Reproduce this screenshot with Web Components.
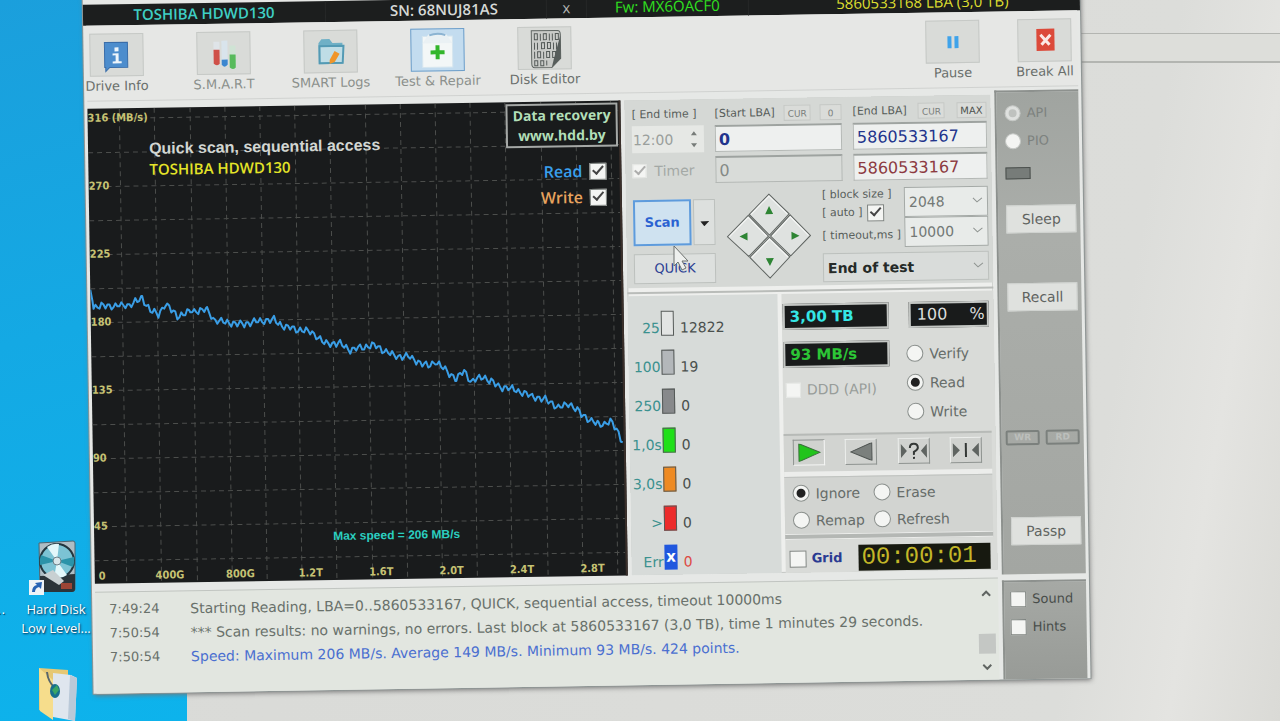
<!DOCTYPE html>
<html lang="en">
<head>
<meta charset="utf-8">
<title>Drive test utility</title>
<style>
html, body { margin: 0; height: 100%; }
body { font: 13px/16px "DejaVu Sans", "Open Sans", sans-serif; color: #3c423f; overflow: hidden; }
</style>
</head>
<body>
<disk-desktop>
  <desktop-icon slot="icons" kind="disk">Hard Disk<br>Low Level...</desktop-icon>
  <desktop-icon slot="icons" kind="folder"></desktop-icon>
  <app-window>
    <drive-strip slot="top"></drive-strip>
    <tool-bar slot="top">
      <tool-button icon="info">Drive Info</tool-button>
      <tool-button icon="smart" faded>S.M.A.R.T</tool-button>
      <tool-button icon="logs" faded>SMART Logs</tool-button>
      <tool-button icon="test" faded active>Test &amp; Repair</tool-button>
      <tool-button icon="editor">Disk Editor</tool-button>
      <tool-button slot="end" icon="pause">Pause</tool-button>
      <tool-button slot="end" icon="break">Break All</tool-button>
    </tool-bar>
    <speed-chart slot="chart"></speed-chart>
    <scan-settings slot="controls"></scan-settings>
    <block-stats slot="stats"></block-stats>
    <scan-monitor slot="monitor"></scan-monitor>
    <event-log slot="log"></event-log>
    <side-rail slot="rail"></side-rail>
  </app-window>
</disk-desktop>

<script>
const BASE = `
:host, *, *::before, *::after { box-sizing: border-box; }
button, input, select { font: inherit; color: inherit; margin: 0; border-radius: 0; }
button { padding: 0; }
label { display: flex; align-items: center; white-space: nowrap; }
input[type=checkbox], input[type=radio] { appearance: none; flex: none; width: 17px; height: 17px; background: #f4f5f3; border: 1px solid #7d827f; display: grid; place-items: center; }
input[type=radio] { border-radius: 50%; border-color: #8b908d; }
input[type=radio]:checked::before { content: ""; width: 9px; height: 9px; border-radius: 50%; background: #222; }
input[type=checkbox]:checked::before { content: ""; width: 11px; height: 6px; border: solid #444; border-width: 0 0 2px 2px; transform: translateY(-2px) rotate(-48deg); }
input:disabled { border-color: #e4e6e3; }
`;
function define(name, css, html) {
  customElements.define(name, class extends HTMLElement {
    constructor() {
      super();
      const t = document.createElement('template');
      t.innerHTML = `<style>${BASE}${css}</style>` + (typeof html === 'function' ? html(this) : html);
      this.attachShadow({ mode: 'open' }).append(t.content.cloneNode(true));
    }
  });
}

/* ---------- desktop ---------- */
define('disk-desktop', `
:host { display: block; position: relative; min-height: 100%; overflow: hidden; background: linear-gradient(100deg, #d9dad7 0%, #dcddda 84%, #e4e4e1 92%, #dadad6 100%); }
.wall { position: absolute; inset: 0 auto 0 0; width: 187px; background: linear-gradient(165deg, #1b9fdc, #14a9e4 45%, #0db3ec); }
.band { position: absolute; top: 33px; right: 0; width: 200px; height: 30px; border: solid #b3b5b1; border-width: 1px 0 2px; background: #dddeda; }
.icons { position: absolute; left: 16px; top: 540px; width: 80px; display: flex; flex-direction: column; gap: 28px; }
.edge { position: absolute; left: -3px; top: 602px; color: #fff; text-shadow: 1px 1px 1px #035; }
.cursor { position: absolute; left: 673px; top: 245px; z-index: 2; }
`, `
<div class="wall"></div><div class="band"></div>
<span class="edge">..</span>
<div class="icons"><slot name="icons"></slot></div>
<slot></slot>
<svg class="cursor" width="18" height="26" viewBox="0 0 18 26"><path d="M1 1v20l4-4 4 8 4-2-4-7h6z" fill="#eef0ee" stroke="#6c706e"/></svg>`);

const DESK = {
  disk: `<svg width="52" height="56" viewBox="0 0 52 56">
    <path d="M13 3 47 1q2 0 2 2v46q0 2-2 2H16q-2 0-2-2z" fill="#aebdc4" stroke="#4e6570"/>
    <path d="M14 36 49 34v15q0 3-3 3H17q-3 0-3-3z" fill="#2b3439"/>
    <circle cx="31" cy="21" r="17" fill="#7cc3d4" stroke="#22363f" stroke-width="2"/>
    <path d="M31 21 21 7a17 17 0 0 1 12-3zM31 21l10 14a17 17 0 0 1-13 3z" fill="#e3f7fa"/>
    <path d="M31 21 15 15a17 17 0 0 0-1 10zM31 21l16 6a17 17 0 0 0 1-10z" fill="#2b93a9"/>
    <circle cx="31" cy="21" r="4" fill="#d8e6ea" stroke="#6d8088"/>
    <path d="m17 35 10-5 11 11-5 4z" fill="#c8d0d2"/><path d="M35 43h11v6H35z" fill="#9b4535"/>
    <path d="M3 40h15v15H3z" fill="#eef3f7"/><path d="M6 52q0-6 5-7l-2-2 7-1-1 7-2-2q-4 1-4 5z" fill="#2763b4"/></svg>`,
  folder: `<svg width="52" height="56" viewBox="0 0 52 56">
    <path d="M13 2 42 4v46H26L13 44z" fill="#e6c874"/>
    <path d="M27 7 45 9l6 3-2 43-22-4z" fill="#dfe6ee"/><path d="m44 9 7 3-2 43-7-2z" fill="#bac9d8"/>
    <path d="M13 2 27 14v40L14 45z" fill="#f6dd8c"/>
    <path d="M21 6q1 10 8 16" fill="none" stroke="#59666b" stroke-width="2"/>
    <ellipse cx="29" cy="25" rx="5" ry="7" fill="#176f8d"/><path d="m26 24 5-5 2 5-4 5z" fill="#3aa565"/></svg>`
};
define('desktop-icon', `
:host { display: flex; flex-direction: column; align-items: center; color: #fff; font: 13px/19px "Open Sans", sans-serif; text-align: center; white-space: nowrap; text-shadow: 1px 1px 2px #024; }
svg { display: block; margin: 0 8px 4px 0; }
`, el => DESK[el.getAttribute('kind')] + '<div><slot></slot></div>');

/* ---------- window frame ---------- */
define('app-window', `
:host { position: absolute; left: 88px; right: 195px; top: -20px; display: block; transform: rotate(-0.9deg); background: #e6e8e6; padding: 17px 3px 0; box-shadow: 0 0 0 1px #8f9695, 1px 2px 5px #777; }
.body { display: grid; grid-template-columns: minmax(0, 1fr) 84px; }
.left { padding: 7px 4px 0 0; display: grid; gap: 8px; }
.main { display: grid; grid-template-columns: minmax(0, 1fr) 366px; gap: 4px; }
.controls { display: grid; gap: 8px; background: #eeefed; box-shadow: inset 0 0 0 1px #c5c8c5; }
.lower { display: grid; grid-template-columns: 150px 1fr; gap: 4px; border-top: 2px solid #b9bcb9; margin-top: -4px; padding-top: 2px; }
`, `
<slot name="top"></slot>
<div class="body">
  <div class="left">
    <div class="main">
      <slot name="chart"></slot>
      <div class="controls"><slot name="controls"></slot>
        <div class="lower"><slot name="stats"></slot><slot name="monitor"></slot></div></div>
    </div>
    <slot name="log"></slot>
  </div>
  <slot name="rail"></slot>
</div>`);

define('drive-strip', `
:host { display: grid; grid-template-columns: 242fr 221fr 40fr 162fr 332fr; height: 21px; margin: 0 -3px; background: #1c1e1e; line-height: 21px; font-size: 15px; font-family: "Open Sans", sans-serif; text-align: center; }
span { white-space: nowrap; }
span + span { border-left: 1px solid #262828; }
.model { color: #3fcfc4; font-weight: 600; } .sn { color: #d6d9d6; padding-left: 16px; font-weight: 600; } .x { color: #b4b7b4; } .fw { color: #30e020; } .lba { color: #dede30; padding-left: 16px; }
`, `<span class="model">TOSHIBA HDWD130</span><span class="sn">SN: 68NUJ81AS</span><span class="x">x</span><span class="fw">Fw: MX6OACF0</span><span class="lba">5860533168 LBA (3,0 TB)</span>`);

define('tool-bar', `
:host { display: flex; justify-content: space-between; height: 76px; padding: 8px 6px 0 3px; background: #e6e7e5; border-bottom: 1px solid #d0d2d0; }
div { display: flex; gap: 53px; } div + div { gap: 38px; }
`, `<div><slot></slot></div><div><slot name="end"></slot></div>`);

const TOOL = {
  info: `<path d="M10 8h23v25H15l-4 4V33h-1z" fill="#4d8dcd" stroke="#3a6da9"/><path d="M20 13h4v4h-4zM18 19h6v8h3v2h-9v-2h3v-6h-3z" fill="#eef5fb"/>`,
  smart: `<path d="M12 9h6v22q-3 3-6 0z" fill="#dfe4e8"/><path d="M12 17h6v14q-3 3-6 0z" fill="#cf5048"/><path d="M20 8h6v24q-3 4-6 0z" fill="#d9e4ec"/><path d="M20 27h6v5q-3 4-6 0z" fill="#3b86cf"/><path d="M28 13h6v22q-3 3-6 0z" fill="#cfe3d4"/><path d="M28 22h6v13q-3 3-6 0z" fill="#58ba5c"/>`,
  logs: `<path d="M10 33V12l3-4h8l3 4h10v21z" fill="#6fb0c6"/><path d="M11 15h24l-1 17H11z" fill="#bfdde6" stroke="#539ab4" stroke-width="2"/><path d="m21 29 5-9 5 3-5 8-5 2z" fill="#ef962a"/>`,
  test: `<path d="M7 7h30v31H7z" fill="#f3f7f7" stroke="#d6e6ef"/><path d="m7 14 6-9h18l6 9z" fill="#eaf1f4"/><path d="M14 6q8-3 16 0" fill="none" stroke="#8cb4d2" stroke-width="2"/><path d="M20 16h4v5h5v4h-5v5h-4v-5h-5v-4h5z" fill="#33b62b"/>`,
  editor: `<path d="M9 3h26q3 0 3 4v24l-9 9H12q-3 0-3-4z" fill="#c9cbc8" stroke="#606663"/><path d="M38 8v23l-9 9 2-8z" fill="#575d5b"/><g fill="none" stroke="#555b59" stroke-width="1"><path d="M12 6h3v6h-3zM18 6v7M21 6h3v6h-3zM27 6v7M30 6v7M33 6h3v6h-3zM12 15v7M15 15v7M19 15h3v6h-3zM25 15h3v6h-3zM31 15v7M34 15v7M12 24v7M15 24h3v6h-3zM21 24v7M24 24h3v6h-3zM30 24h3v6h-3zM12 33h3v5h-3zM18 33h3v5h-3zM24 33v5"/></g>`,
  pause: `<path d="M17 15h4v12h-4zM24 15h4v12h-4z" fill="#3fa3ea"/>`,
  break: `<path d="M14 9h18v22H14z" fill="#dc4a3a"/><path d="m18 15 9 10M28 15l-9 10" stroke="#fbe9e5" stroke-width="3"/>`
};
define('tool-button', `
:host { display: block; width: 54px; }
button { display: flex; flex-direction: column; align-items: center; width: 100%; border: 0; background: none; color: #6a6f6c; line-height: 20px; white-space: nowrap; }
:host([faded]) button { color: #8b908c; }
.face { width: 54px; height: 43px; display: grid; place-items: center; border: 1px solid #c6c9c6; background: #d9dbd8; }
:host([active]) .face { background: #c3dcef; border-color: #6f9fc9; }
`, el => `<button type="button"><span class="face"><svg width="45" height="41" viewBox="0 0 45 41">${TOOL[el.getAttribute('icon')]}</svg></span><span><slot></slot></span></button>`);

/* ---------- speed chart ---------- */
const key = [[0,181],[3,198],[39,197],[52,190],[60,203],[68,207],[75,196],[87,209],[100,204],[117,203],[125,214],[150,218],[168,215],[184,214],[194,221],[222,227],[234,238],[250,239],[260,245],[284,241],[304,252],[318,253],[338,263],[345,258],[366,276],[374,268],[381,279],[393,274],[408,284],[426,288],[443,295],[458,299],[468,306],[479,302],[493,315],[508,324],[520,321],[526,329],[532,342]];
const pts = [];
for (let i = 0; i < key.length - 1; i++) {
  const [x0, y0] = key[i], [x1, y1] = key[i + 1];
  for (let x = x0; x < x1; x += 2) {
    const n = 3 * Math.sin(x * 0.95) + Math.sin(x * 0.37);
    pts.push(x + ',' + Math.round(y0 + (y1 - y0) * (x - x0) / (x1 - x0) + (x > 2 ? n : 0)));
  }
}
pts.push('532,342');
let grid = '';
for (let i = 0; i < 14; i++) grid += `<path d="M0 ${10 + i * 34}H533"/>`;
for (let i = 1; i < 16; i++) grid += `<path d="M${Math.round(i * 35.2 - 3)} 0V475"/>`;
const ys = ['316 (MB/s)', 270, 225, 180, 135, 90, 45].map((t, i) => `<span style="top:${10 + i * 68}px">${t}</span>`).join('');
const xs = ['0', '400G', '800G', '1.2T', '1.6T', '2.0T', '2.4T', '2.8T'].map(t => `<span>${t}</span>`).join('');
define('speed-chart', `
:host { display: block; position: relative; min-height: 475px; background: #191b1c; overflow: hidden; border-right: 2px solid #3a2f2a; }
svg.plot { position: absolute; inset: 0; width: 100%; height: 100%; }
.grid { stroke: #4c4e4c; stroke-dasharray: 5 4; fill: none; }
.line { stroke: #3a9ee6; stroke-width: 2; fill: none; stroke-linejoin: round; }
.y span { position: absolute; left: 0; transform: translateY(-50%); }
.y, .x { font: bold 11px/14px "DejaVu Sans Condensed", sans-serif; color: #c6c273; }
.x { position: absolute; left: 4px; right: -2px; bottom: 0; display: grid; grid-template-columns: 36px repeat(7, 1fr); }
.x span + span { text-align: center; }
.titles { position: absolute; left: 61px; top: 31px; line-height: 20px; font-weight: bold; }
.t1 { color: #d2d6d2; font-size: 16px; font-family: "Liberation Sans", sans-serif; } .t2 { color: #e4e428; font-size: 15px; font-family: "Open Sans", sans-serif; font-weight: 600; }
.max { position: absolute; left: 45%; bottom: 36px; color: #2bcfc0; font: bold 12px/16px "Liberation Sans", sans-serif; white-space: nowrap; }
.ad { position: absolute; right: 1px; top: 2px; width: 112px; height: 44px; border: 2px solid #a5a8a6; display: grid; grid-template-rows: 20px 20px; justify-items: center; color: #b2dfb8; font: bold 14px/20px "Open Sans", sans-serif; background: #191b1c; white-space: nowrap; }
.series { position: absolute; right: 13px; top: 57px; display: grid; justify-items: end; font: 600 16px/26px "Open Sans", sans-serif; }
.series label { gap: 7px; height: 26px; color: #39a0ee; } .series label + label { color: #e8a35e; }
`, `
<svg class="plot" viewBox="0 0 533 475" preserveAspectRatio="none"><g class="grid">${grid}</g><polyline class="line" points="${pts.join(' ')}"/></svg>
<div class="y">${ys}</div><div class="x">${xs}</div>
<div class="titles"><div class="t1">Quick scan, sequential access</div><div class="t2">TOSHIBA HDWD130</div></div>
<div class="max">Max speed = 206 MB/s</div>
<div class="ad"><span>Data recovery</span><span>www.hdd.by</span></div>
<div class="series"><label>Read<input type="checkbox" checked></label><label>Write<input type="checkbox" checked></label></div>`);

/* ---------- scan settings ---------- */
const CHEV = `<svg width="11" height="7" viewBox="0 0 11 7"><path d="m1 1 4 4 5-4" fill="none" stroke="#8f9491"/></svg>`;
define('scan-settings', `
:host { display: block; padding: 7px 4px 3px 7px; background: #d5d8d5; color: #565c59; min-height: 188px; }
.top { display: grid; grid-template-columns: 72px 127px 1fr; grid-template-rows: 15px 27px 27px; gap: 4px 11px; }
.cap { font-size: 11px; display: flex; justify-content: space-between; align-items: center; white-space: nowrap; }
.cap button { font-size: 9px; height: 16px; min-width: 22px; padding: 0 3px; border: 1px solid #c5c8c5; background: #dadcd9; color: #7b807d; }
.cap .max { color: #4d524f; font-size: 10px; }
input[type=text] { width: 100%; min-width: 0; height: 100%; border: 1px solid #b4b8b5; border-top: 2px solid #9ea3a0; background: #eef0ef; padding: 0 0 0 3px; font-size: 16px; color: #22348c; }
.time { display: flex; background: #e6e8e5; } .time input[type=text] { border: 0; background: none; color: #9a9f9c; font-size: 14px; padding-left: 1px; }
.time svg { flex: none; align-self: center; margin-right: 6px; }
.top input.off { background: #d9dcd9; color: #858a87; } .top input.red { color: #8c3a41; } input.b { font-weight: bold; }
.timer { gap: 8px; color: #a3a8a5; font-size: 14px; } .timer input { width: 14px; height: 14px; } .timer input::before { opacity: .4; }
.low { display: flex; justify-content: space-between; margin-top: 7px; }
.run { width: 82px; display: grid; grid-template-columns: 58px 22px; grid-template-rows: 46px 30px; gap: 8px 2px; margin-top: 9px; }
.scan { border: 2px solid #5e9bdc; background: #cfe2f0; color: #2a62d2; font-weight: bold; font-size: 13px; }
.more, .quick { border: 1px solid #bcc0bd; background: #dde0de; } .quick { grid-column: 1 / 3; color: #2b3f94; }
.params { width: 166px; display: grid; grid-template-columns: 82px 84px; grid-template-rows: 60px 29px; row-gap: 5px; }
.caps { display: grid; grid-template-rows: 14px 22px 24px; align-items: center; font-size: 11px; white-space: nowrap; } .caps label { gap: 5px; }
.sel { position: relative; } .sel svg { position: absolute; right: 5px; top: 11px; pointer-events: none; }
select { appearance: none; width: 100%; height: 30px; border: 1px solid #a4a9a6; background: #e8ebe9; padding: 0 0 0 4px; font-size: 14px; color: #737976; display: block; }
.wide { grid-column: 1 / 3; } .wide select { font-weight: bold; color: #252a28; height: 29px; border-color: #bcc0bd; background: #d9dcda; }
.seek { margin-top: 3px; }
`, `
<div class="top">
  <label class="cap" for="time">[ End time ]</label>
  <div class="cap"><label for="start">[Start LBA]</label><button type="button">CUR</button><button type="button">0</button></div>
  <div class="cap"><label for="end">[End LBA]</label><button type="button">CUR</button><button type="button" class="max">MAX</button></div>
  <div class="time"><input id="time" type="text" value="12:00" disabled><svg width="8" height="18" viewBox="0 0 8 18"><path d="m1 5 3-4 3 4zM1 13l3 4 3-4z" fill="#777c79"/></svg></div>
  <input class="b" id="start" type="text" value="0"><input id="end" type="text" value="5860533167">
  <label class="timer"><input type="checkbox" checked disabled>Timer</label>
  <input class="off" type="text" value="0" aria-label="Current start"><input class="red" type="text" value="5860533167" aria-label="Current end">
</div>
<div class="low">
  <div class="run"><button type="button" class="scan">Scan</button><button type="button" class="more" aria-label="Scan options"><svg width="9" height="5" viewBox="0 0 9 5"><path d="M0 0h9L4 5z" fill="#222"/></svg></button><button type="button" class="quick">QUICK</button></div>
  <svg class="seek" width="86" height="88" viewBox="0 0 86 88" role="img" aria-label="Seek direction">
    <g fill="#dfe2e0" stroke="#5e6360" stroke-width="1"><path d="m43 2 20 20-20 21-20-21zM22 23l20 21-20 20L1 44zM64 23l20 21-20 20-20-20zM43 45l20 20-20 21-20-21z"/></g>
    <g fill="none" stroke="#f7f8f7" stroke-width="1"><path d="M25 22 43 4l18 18M3 44l19-19 18 19M46 44l18-19 18 19M25 65l18-18 18 18"/></g>
    <path d="m43 14 4 8h-8zM43 74l4-8h-8zM13 44l8-4v8zM73 44l-8-4v8z" fill="#2e8534"/></svg>
  <div class="params">
    <div class="caps"><label for="bs">[ block size ]</label><label>[ auto ]<input type="checkbox" checked></label><label for="to">[ timeout,ms ]</label></div>
    <div><div class="sel"><select id="bs"><option>2048</option></select>${CHEV}</div><div class="sel"><select id="to"><option>10000</option></select>${CHEV}</div></div>
    <div class="sel wide"><select aria-label="After test"><option>End of test</option></select>${CHEV}</div>
  </div>
</div>`);

/* ---------- block statistics ---------- */
const stats = [['25', '#e2e4e3', '12822'], ['100', '#b3b7ba', '19'], ['250', '#87898b', '0'], ['1,0s', '#1fe018', '0'], ['3,0s', '#ee8a22', '0'], ['&gt;', '#ec2b2b', '0']];
define('block-stats', `
:host { display: block; background: #d7dbd9; padding: 15px 0 0; min-height: 279px; }
ul { list-style: none; margin: 0; padding: 0; display: grid; gap: 14px; font-size: 14px; }
li { display: grid; grid-template-columns: 32px 13px 1fr; column-gap: 1px; align-items: end; height: 25px; color: #3b918f; text-align: right; }
i { display: block; width: 13px; height: 25px; border: 1px solid #555a58; font: bold 16px/22px "Open Sans", sans-serif; color: #fff; text-align: center; }
b { font-weight: normal; color: #4a504d; text-align: left; padding-left: 5px; } .err b { color: #dd4b45; }
.err i { border: 0; background: #2057de; }
`, `<ul>${stats.map(s => `<li>${s[0]}<i style="background:${s[1]}"></i><b>${s[2]}</b></li>`).join('')}<li class="err">Err<i>x</i><b>0</b></li></ul>`);

/* ---------- monitor ---------- */
define('scan-monitor', `
:host { display: block; color: #666c69; font-size: 14px; padding-right: 4px; background: #d9dbd8; }
.read { display: grid; grid-template-columns: 106px 80px; justify-content: space-between; height: 140px; padding: 10px 1px 0; }
.lcd { height: 26px; border: 2px solid #c3c6c3; background: #191b1b; padding: 0 5px; line-height: 22px; font-size: 15px; font-weight: bold; display: flex; justify-content: space-between; }
.tb { color: #35e6e6; margin-bottom: 12px; } .mb { color: #2cc636; margin-bottom: 12px; } .pc { color: #dcdedc; font-weight: normal; font-size: 16px; padding: 0 2px 0 6px; }
.ddd { gap: 6px; padding-left: 2px; color: #989d9a; height: 20px; } .ddd input { width: 15px; height: 15px; }
.mode { padding-top: 11px; margin-left: -3px; } .mode label { height: 29px; gap: 6px; }
.play { height: 38px; border-top: 2px solid #b7bab7; background: #d2d4d1; padding: 4px 10px 0 9px; display: flex; justify-content: space-between; }
.play button { width: 32px; height: 26px; border: 1px solid; border-color: #eceeec #8f9491 #8f9491 #eceeec; background: #d0d2cf; display: grid; place-items: center; }
.play button:first-child { border-color: #8f9491 #f5f6f5 #f5f6f5 #8f9491; }
.gap { height: 5px; background: #ecedeb; }
.act { height: 57px; border-top: 1px solid #bfc2bf; background: #d2d4d1; padding: 2px 8px 0; display: grid; grid-template-columns: 81px 1fr; grid-auto-rows: 27px; }
.act label { gap: 6px; }
.rule { height: 6px; border: solid #ecedeb; border-width: 1px 0; background: #b4b7b4; }
.foot { height: 33px; display: flex; align-items: center; justify-content: space-between; padding: 5px 3px 0 4px; }
.foot label { gap: 5px; color: #2a3a92; font-weight: bold; font-size: 13px; }
.clock { width: 132px; height: 26px; background: #171910; color: #c3b728; font: 24px/26px "Liberation Mono", monospace; padding-left: 3px; white-space: nowrap; }
`, `
<div class="read">
  <div><div class="lcd tb">3,00 TB</div><div class="lcd mb">93 MB/s</div><label class="ddd"><input type="checkbox" disabled>DDD (API)</label></div>
  <div><div class="lcd pc"><span>100</span><span>%</span></div><div class="mode"><label><input type="radio" name="mode">Verify</label><label><input type="radio" name="mode" checked>Read</label><label><input type="radio" name="mode">Write</label></div></div>
</div>
<div class="play">
  <button type="button" aria-label="Forward"><svg width="24" height="18" viewBox="0 0 24 18"><path d="M2 0v18l21-9z" fill="#22c41c" stroke="#39703a"/></svg></button>
  <button type="button" aria-label="Back"><svg width="24" height="18" viewBox="0 0 24 18"><path d="M23 0v18L2 9z" fill="#7b807d" stroke="#4e5351"/></svg></button>
  <button type="button" aria-label="Random"><svg width="28" height="18" viewBox="0 0 28 18"><path d="M1 2v14l6-7zM27 2v14l-6-7z" fill="#5f6461"/><path d="M10 6q0-4 4-4t4 4q0 2-4 4v3M14 15v2" fill="none" stroke="#343836" stroke-width="2"/></svg></button>
  <button type="button" aria-label="Butterfly"><svg width="28" height="18" viewBox="0 0 28 18"><path d="M1 2v14l7-7zM27 2v14l-7-7z" fill="#5f6461"/><path d="M14 2v14" stroke="#343836" stroke-width="2"/></svg></button>
</div>
<div class="gap"></div>
<div class="act"><label><input type="radio" name="act" checked>Ignore</label><label><input type="radio" name="act">Erase</label><label><input type="radio" name="act">Remap</label><label><input type="radio" name="act">Refresh</label></div>
<div class="rule"></div>
<div class="foot"><label><input type="checkbox">Grid</label><div class="clock">00:00:01</div></div>`);

/* ---------- log ---------- */
define('event-log', `
:host { display: flex; justify-content: space-between; height: 102px; background: #e2e6e0; border-top: 1px solid #c1c5c1; overflow: hidden; }
table { border-collapse: collapse; margin: 5px 0 0 14px; color: #69716b; align-self: start; font-size: 14px; }
td { padding: 0; height: 24px; white-space: nowrap; } td:first-child { width: 81px; font-size: 13px; }
.sum { color: #4a6fd0; }
.bar { width: 24px; display: grid; grid-template-rows: 28px 1fr 20px 26px; place-items: center; } i { width: 17px; height: 20px; background: #c4c7c4; grid-row: 3; } .down { grid-row: 4; }
`, `<table><tr><td>7:49:24</td><td>Starting Reading, LBA=0..5860533167, QUICK, sequential access, timeout 10000ms</td></tr>
<tr><td>7:50:54</td><td>*** Scan results: no warnings, no errors. Last block at 5860533167 (3,0 TB), time 1 minutes 29 seconds.</td></tr>
<tr><td>7:50:54</td><td class="sum">Speed: Maximum 206 MB/s. Average 149 MB/s. Minimum 93 MB/s. 424 points.</td></tr></table>
<div class="bar"><svg width="10" height="7" viewBox="0 0 10 7"><path d="m1 6 4-4 4 4" fill="none" stroke="#606562" stroke-width="2"/></svg><i></i><svg class="down" width="10" height="7" viewBox="0 0 10 7"><path d="m1 1 4 4 4-4" fill="none" stroke="#606562" stroke-width="2"/></svg></div>`);

/* ---------- side rail ---------- */
define('side-rail', `
:host { display: grid; grid-template-rows: 484px 1fr; gap: 6px; padding-top: 3px; }
section { background: linear-gradient(#a0a4a0, #abaeaa 30%, #a3a6a2); border: solid #8d918e; border-width: 2px 0 0 2px; padding: 7px 4px 0 8px; display: flex; flex-direction: column; align-items: flex-start; }
label { height: 28px; gap: 6px; color: #7d827f; } label input[type=radio] { width: 16px; height: 16px; border-color: #c5c8c5; background: #dfe1df; } label.pio input[type=radio] { background: #f4f5f3; }
label.api input::before { content: ""; width: 8px; height: 8px; border-radius: 50%; background: #bfc2bf; }
.led { width: 25px; height: 12px; background: #777c79; border: 1px solid #4c514e; margin: 12px 0 26px; }
button { width: 70px; height: 28px; border: 1px solid #cfd2cf; background: #dfe1de; color: #5f6461; font-size: 14px; }
button + button { margin-top: 50px; }
.lamps { display: flex; gap: 6px; margin: 119px 0 72px -4px; } .lamps span { width: 34px; height: 15px; border: 2px solid #7b807d; border-radius: 2px; font: bold 9px/11px "DejaVu Sans", sans-serif; color: #bcbfbc; text-align: center; }
.opt { padding: 3px 4px 0 6px; background: linear-gradient(#a6a9a5, #989b97); } .opt label { color: #484d4a; } .opt input { width: 16px; height: 16px; }
`, `
<section><label class="api"><input type="radio" name="io" disabled>API</label><label class="pio"><input type="radio" name="io" disabled>PIO</label>
<div class="led"></div><button type="button">Sleep</button><button type="button">Recall</button>
<div class="lamps"><span>WR</span><span>RD</span></div><button type="button">Passp</button></section>
<section class="opt"><label><input type="checkbox">Sound</label><label><input type="checkbox">Hints</label></section>`);
</script>
</body>
</html>
